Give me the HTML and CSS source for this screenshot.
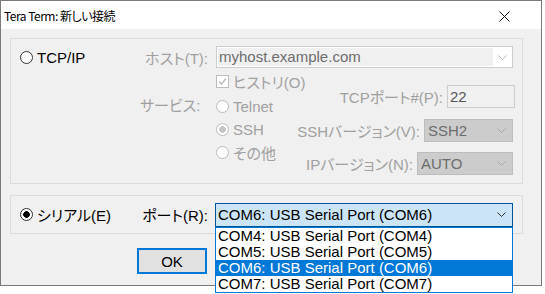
FILE: index.html
```html
<!DOCTYPE html>
<html lang="ja">
<head>
    <meta charset="UTF-8">
    <meta name="viewport" content="width=device-width, initial-scale=1.0">
    <title>Tera Term: 新しい接続</title>
    <link rel="stylesheet" href="styles.css">
</head>
<body>

    <div class="window">
        <div class="titlebar">
            <span class="title">Tera Term: 新しい接続</span>
            <svg class="close" width="11" height="11" viewBox="0 0 11 11">
                <path d="M0.5 0.5 L10.5 10.5 M10.5 0.5 L0.5 10.5" stroke="#111" stroke-width="1" fill="none"/>
            </svg>
        </div>

        <div class="dialog">
            <!-- TCP/IP (disabled) -->
            <div class="group group-tcp">
                <div class="choice radio-col">
                    <span class="radio"></span>TCP/IP
                </div>
                <div class="tcp-main">
                    <div class="field-row">
                        <span class="label disabled">ホスト(T):</span>
                        <div class="combo-host">
                            <span class="combo-edit">myhost.example.com</span>
                            <span class="arrow-box">
                                <svg width="9" height="5" viewBox="0 0 9 5"><path d="M0.5 0.5 L4.5 4.5 L8.5 0.5" stroke="#b5b5b5" fill="none"/></svg>
                            </span>
                        </div>
                    </div>
                    <div class="tcp-lower">
                        <div class="label-col">
                            <span class="label disabled">サービス:</span>
                        </div>
                        <div class="options">
                            <div class="choice opt-history disabled">
                                <span class="check">
                                    <svg width="11" height="11" viewBox="0 0 11 11"><path d="M2 5.5 L4.5 8 L9 2.5" stroke="#b5b5b5" stroke-width="1.2" fill="none"/></svg>
                                </span>ヒストリ(O)
                            </div>
                            <div class="choice opt-telnet disabled"><span class="radio off"></span>Telnet</div>
                            <div class="choice opt-ssh disabled"><span class="radio off dot-gray"></span>SSH</div>
                            <div class="choice opt-other disabled"><span class="radio off"></span>その他</div>
                        </div>
                        <div class="tcp-right">
                            <div class="right-row">
                                <span class="disabled">TCPポート#(P):</span>
                                <div class="textbox port">22</div>
                            </div>
                            <div class="right-row row-ssh">
                                <span class="disabled">SSHバージョン(V):</span>
                                <div class="combo-gray ssh-ver">SSH2
                                    <svg width="9" height="5" viewBox="0 0 9 5"><path d="M0.5 0.5 L4.5 4.5 L8.5 0.5" stroke="#a8a8a8" fill="none"/></svg>
                                </div>
                            </div>
                            <div class="right-row row-ip">
                                <span class="disabled">IPバージョン(N):</span>
                                <div class="combo-gray ip-ver">AUTO
                                    <svg width="9" height="5" viewBox="0 0 9 5"><path d="M0.5 0.5 L4.5 4.5 L8.5 0.5" stroke="#a8a8a8" fill="none"/></svg>
                                </div>
                            </div>
                        </div>
                    </div>
                </div>
            </div>

            <!-- Serial -->
            <div class="group group-serial">
                <div class="choice radio-col">
                    <span class="radio dot"></span>シリアル(E)
                </div>
                <span class="label">ポート(R):</span>
                <div class="combo-serial">
                    <span>COM6: USB Serial Port (COM6)</span>
                    <svg width="9" height="5" viewBox="0 0 9 5"><path d="M0.5 0.5 L4.5 4.5 L8.5 0.5" stroke="#333" fill="none"/></svg>
                    <ul class="dropdown">
                        <li>COM4: USB Serial Port (COM4)</li>
                        <li>COM5: USB Serial Port (COM5)</li>
                        <li class="selected">COM6: USB Serial Port (COM6)</li>
                        <li>COM7: USB Serial Port (COM7)</li>
                    </ul>
                </div>
            </div>

            <div class="buttons">
                <button class="btn btn-default">OK</button>
            </div>
        </div>
    </div>

</body>
</html>
```

FILE: styles.css
```css
html, body {
    margin: 0;
    min-height: 294px;
}
body {
    background-color: #fff;
    font-family: "Liberation Sans", "Noto Sans CJK JP", sans-serif;
    font-size: 15px;
    font-feature-settings: "palt";
    color: #000;
}
.window {
    width: 542px;
    height: 286px;
    box-sizing: border-box;
    border: 1px solid #7a7a7a;
    background-color: #f0f0f0;
}
.titlebar {
    height: 28px;
    background-color: #fff;
    display: flex;
    align-items: center;
    justify-content: space-between;
    padding-left: 3px;
    font-family: "Noto Sans CJK JP", sans-serif;
    font-size: 12px;
    letter-spacing: -0.5px;
}
.close {
    margin-right: 31px;
    margin-top: 3px;
}
.dialog {
    padding: 9px 0 0 9px;
}
.group {
    box-sizing: border-box;
    width: 513px;
    border: 1px solid #dcdcdc;
}
.group-tcp {
    height: 146px;
    padding: 7px 0 0 9px;
    display: flex;
    align-items: flex-start;
}
.group-serial {
    margin-top: 11px;
    height: 39px;
    padding-left: 9px;
    display: flex;
    align-items: center;
}
.choice {
    display: flex;
    align-items: center;
    gap: 4px;
    white-space: nowrap;
}
.radio-col {
    width: 120px;
    height: 22px;
    flex: none;
}
.radio {
    width: 13px;
    height: 13px;
    box-sizing: border-box;
    border: 1px solid #333;
    border-radius: 50%;
    background-color: #fff;
    flex: none;
}
.radio.dot {
    background: radial-gradient(circle, #000 0 3px, #fff 3.6px);
}
.radio.off {
    border-color: #bcbcbc;
}
.radio.dot-gray {
    background: radial-gradient(circle, #c4c4c4 0 3px, #fff 3.6px);
}
.check {
    width: 13px;
    height: 13px;
    box-sizing: border-box;
    border: 1px solid #bcbcbc;
    background-color: #fff;
    display: flex;
    align-items: center;
    justify-content: center;
    flex: none;
}
.disabled {
    color: #a0a0a0;
}
.label {
    width: 68px;
    text-align: right;
    flex: none;
    white-space: nowrap;
}
.tcp-main {
    width: 373px;
}
.field-row {
    display: flex;
    align-items: center;
    gap: 8px;
    height: 22px;
}
.combo-host {
    flex: 1;
    height: 22px;
    box-sizing: border-box;
    border: 1px solid #ccc;
    background-color: #fff;
    padding: 1px;
    display: flex;
}
.combo-edit {
    flex: 1;
    background-color: #f0f0f0;
    color: #6d6d6d;
    padding-left: 1px;
    line-height: 18px;
}
.arrow-box {
    width: 18px;
    display: flex;
    align-items: center;
    justify-content: center;
}
.tcp-lower {
    display: flex;
}
.label-col {
    width: 68px;
    padding-top: 26px;
    margin-right: 8px;
    line-height: 24px;
}
.options {
    width: 80px;
}
.opt-history {
    margin-top: 2px;
    height: 23px;
}
.opt-telnet {
    margin-top: 1px;
    height: 24px;
}
.opt-ssh, .opt-other {
    height: 23px;
}
.tcp-right {
    flex: 1;
    margin-top: 17px;
    display: flex;
    flex-direction: column;
    align-items: flex-end;
}
.right-row {
    display: flex;
    align-items: center;
    gap: 4px;
    white-space: nowrap;
}
.row-ssh {
    margin-top: 11px;
}
.row-ip {
    margin-top: 10px;
}
.textbox {
    box-sizing: border-box;
    height: 23px;
    border: 1px solid #ccc;
    background-color: #f0f0f0;
    color: #555;
    padding-left: 2px;
    line-height: 21px;
}
.port {
    width: 68px;
    margin-right: -2px;
}
.combo-gray {
    box-sizing: border-box;
    height: 23px;
    border: 1px solid #bdbdbd;
    background-color: #ccc;
    color: #6d6d6d;
    padding: 0 6px 0 3px;
    display: flex;
    align-items: center;
    justify-content: space-between;
}
.ssh-ver {
    width: 89px;
}
.ip-ver {
    width: 96px;
}
.combo-serial {
    position: relative;
    width: 298px;
    height: 24px;
    margin-left: 7px;
    box-sizing: border-box;
    border: 1px solid #005499;
    background-color: #cce4f7;
    padding: 0 6px 0 2px;
    display: flex;
    align-items: center;
    justify-content: space-between;
    flex: none;
}
.dropdown {
    position: absolute;
    top: calc(100% + 1px);
    left: -1px;
    width: 298px;
    box-sizing: border-box;
    margin: 0;
    padding: 0;
    list-style: none;
    border: 1px solid #0078d7;
    background-color: #fff;
    z-index: 2;
}
.dropdown li {
    height: 16px;
    line-height: 16px;
    padding-left: 2px;
}
.dropdown li.selected {
    background-color: #0078d7;
    color: #fff;
}
.buttons {
    margin-top: 14px;
    padding-left: 127px;
    display: flex;
}
.btn {
    width: 70px;
    height: 26px;
    box-sizing: border-box;
    border: 1px solid #adadad;
    background-color: #e1e1e1;
    font: inherit;
    color: #000;
    padding: 0;
}
.btn-default {
    border: 2px solid #0078d7;
}
```
